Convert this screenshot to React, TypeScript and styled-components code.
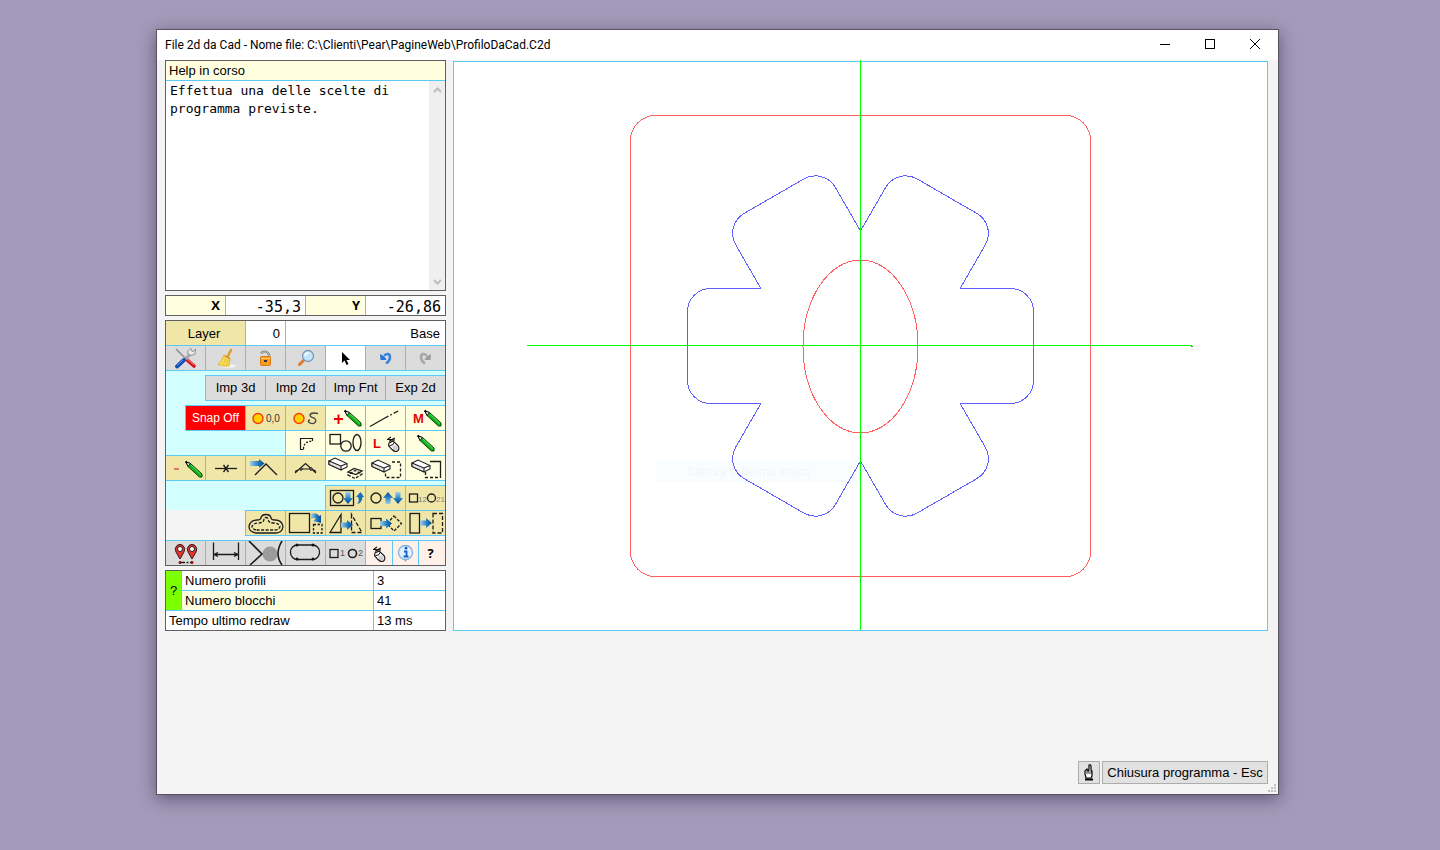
import React from "react";
import styled, { createGlobalStyle } from "styled-components";

const line = "#5ccaf6";
const frame = "#5f5f5f";
const surface = "#f4f4f4";
const khaki = "#f0e6a8";
const cream = "#ffffe0";
const silver = "#dcdcdc";
const peach = "#fff0e8";
const aqua = "#d3ffff";
const sans = `"Liberation Sans", Arial, sans-serif`;
const mono = `"DejaVu Sans Mono", Consolas, monospace`;
const humanist = `"Open Sans", "Segoe UI", sans-serif`;
const caption = `Roboto, "Segoe UI", sans-serif`;

const GlobalStyle = createGlobalStyle`
  * { box-sizing: border-box; }
  body { margin: 0; font: 13px/16px ${sans}; color: #000; }
  button, input, textarea { font: inherit; color: inherit; margin: 0; padding: 0; border: 0; border-radius: 0; background: none; outline: none; }
  svg { display: block; }
`;

const Desktop = styled.div`
  display: flex;
  min-height: 100vh;
  padding: 29px 161px 55px 156px;
  background: #a29bb9;
`;

const Window = styled.div`
  position: relative;
  flex: 1;
  min-width: 0;
  display: flex;
  flex-direction: column;
  border: 1px solid #57525f;
  background: ${surface};
  box-shadow: 0 4px 16px rgba(30, 20, 50, 0.5);
`;

const TitleBar = styled.header`
  display: flex;
  height: 30px;
  padding-left: 8px;
  background: #fff;
`;

const Title = styled.h1`
  flex: 1;
  margin: 0;
  font: 400 12px/30px ${caption};
  white-space: nowrap;
`;

const CaptionButton = styled.button`
  display: grid;
  place-items: center;
  width: 45px;
  height: 29px;
`;

const Content = styled.main`
  display: flex;
  align-items: flex-start;
  gap: 7px;
  padding: 0 10px 0 8px;
`;

const Sidebar = styled.aside`
  flex: none;
  width: 281px;
  display: flex;
  flex-direction: column;
  gap: 4px;
`;

const Panel = styled.section`
  border: 1px solid ${frame};
  background: #fff;
`;

const HelpTitle = styled.label`
  display: block;
  height: 20px;
  padding-left: 3px;
  border-bottom: 1px solid ${line};
  background: ${cream};
  line-height: 19px;
`;

const HelpBody = styled.div`
  display: flex;
  height: 209px;
`;

const HelpText = styled.textarea`
  flex: 1;
  min-width: 0;
  padding: 1px 0 0 4px;
  resize: none;
  overflow: hidden;
  font: 13px/18px ${mono};
`;

const ScrollTrack = styled.div`
  display: flex;
  flex-direction: column;
  justify-content: space-between;
  width: 16px;
  background: #efefef;
`;

const ScrollButton = styled.button`
  display: grid;
  place-items: center;
  height: 17px;
`;

const Coordinates = styled(Panel)`
  display: grid;
  grid-template-columns: 59px 81px 59px 80px;
  height: 21px;
`;

const AxisLabel = styled.label`
  padding-right: 5px;
  background: ${cream};
  font: 700 13px/19px ${humanist};
  text-align: right;
`;

const AxisValue = styled.input`
  width: 100%;
  height: 19px;
  padding: 2px 4px 0 0;
  border: 1px solid ${line};
  border-width: 0 1px;
  font: 15px/17px ${mono};
  text-align: right;
  &:last-child { border-right: 0; }
`;

const Toolbox = styled(Panel)`
  background: ${surface};
`;

const LayerRow = styled.div`
  display: grid;
  grid-template-columns: 79px 40px 1fr;
  height: 24px;
  background: #fff;
`;

const LayerLabel = styled.label`
  padding: 1px 3px 0 0;
  background: ${khaki};
  line-height: 23px;
  text-align: center;
`;

const LayerField = styled.input`
  width: 100%;
  height: 24px;
  padding: 1px 5px 0 0;
  border-left: 1px solid ${line};
  text-align: right;
`;

const AquaArea = styled.div`
  padding-top: 4px;
  background: ${aqua};
`;

const ToolGroup = styled.div`
  margin-bottom: 4px;
`;

const ToolRow = styled.div<{ $joined?: boolean; $open?: boolean }>`
  display: flex;
  justify-content: flex-end;
  height: ${(p) => (p.$open ? 25 : 26)}px;
  margin-top: ${(p) => (p.$joined ? -1 : 0)}px;
  & > button { border-bottom-width: ${(p) => (p.$open ? 0 : 1)}px; }
`;

const Tool = styled.button<{ $bg: string; $w?: number; $first?: boolean }>`
  flex: none;
  display: flex;
  align-items: center;
  justify-content: center;
  width: ${(p) => p.$w ?? 40}px;
  border: 0 solid ${line};
  border-width: 1px 0 1px ${(p) => (p.$first ? 0 : 1)}px;
  background: ${(p) => p.$bg};
  white-space: nowrap;
  overflow: hidden;
`;

const SnapTool = styled(Tool)`
  color: #fff;
  font-size: 12px;
`;

const HelpTool = styled(Tool)`
  padding-right: 3px;
  font: 700 13px/16px ${humanist};
`;

const Stats = styled.table`
  width: 100%;
  border: 1px solid ${frame};
  border-spacing: 0;
  background: #fff;
  table-layout: fixed;
  th, td {
    height: 20px;
    padding: 0 0 0 3px;
    border-bottom: 1px solid ${line};
    font-weight: 400;
    line-height: 19px;
    text-align: left;
  }
  td { border-left: 1px solid ${line}; }
  tr:last-child > * { height: 19px; border-bottom: 0; }
`;

const StatHelpCell = styled.td`
  && { padding: 0; border-left: 0; border-right: 1px solid ${line}; background: #7cff00; text-align: center; }
`;

const StatName = styled.th<{ $tint?: boolean }>`
  background: ${(p) => (p.$tint ? cream : "#fff")};
`;

const StatHelp = styled.button`
  width: 15px;
  height: 38px;
`;

const Drawing = styled.section`
  flex: 1;
  min-width: 0;
  margin-top: 1px;
  border: 1px solid ${line};
  background: #fff;
  svg { width: 100%; height: auto; overflow: visible; }
`;

const Footer = styled.footer`
  display: flex;
  justify-content: flex-end;
  gap: 2px;
  margin-top: auto;
  padding: 0 10px 10px;
`;

const FooterButton = styled.button`
  display: grid;
  place-items: center;
  min-width: 22px;
  height: 23px;
  border: 1px solid #adadad;
  background: #e1e1e1;
`;

const CloseProgram = styled(FooterButton)`
  width: 166px;
`;

const Grip = styled.svg`
  position: absolute;
  right: 1px;
  bottom: 1px;
`;

/* ---------- icons ---------- */

type IconProps = { w?: number; children: React.ReactNode };
const Icon = ({ w = 39, children }: IconProps) => (
  <svg width={w} height={24} viewBox={`0 0 ${w} 24`} fill="none" stroke="#1c1c1c" strokeWidth="1.3" aria-hidden="true">
    {children}
  </svg>
);

const Pencil = ({ x, y }: { x: number; y: number }) => (
  <g transform={`translate(${x} ${y})`} strokeWidth="1">
    <path d="M0 0 L4.500 1.500 L16 12 L16 15 L13.500 15 L2 4.500 Z" fill="#12b41c" stroke="#053c08" />
    <path d="M5 3 L15 12.500" stroke="#5fe05f" />
    <path d="M0 0 L4.500 1.500 L2 4.500 Z" fill="#fff" stroke="#111" />
    <path d="M-.5 -.5 L1.500 1" stroke="#000" strokeWidth="2" />
  </g>
);

const Arrow = ({ x, y, r = 0 }: { x: number; y: number; r?: number }) => (
  <g transform={`translate(${x} ${y}) rotate(${r})`} stroke="none">
    <path d="M-6 -2.500 H0 V-5 L6 0 L0 5 V2.500 H-6 Z" fill="url(#blueArrow)" />
  </g>
);

const Mouse = ({ x, y }: { x: number; y: number }) => (
  <g transform={`translate(${x} ${y})`} stroke="#111" strokeWidth="1.1">
    <path d="M1 2 L4 0 M0 2.500 H5 L8 1 M3 5 Q2 3 5 3 L8 3" />
    <path d="M2 6 L6 4 L11 8.500 Q13 12 10.500 14 Q8 15.500 5 12.500 L1.500 8.500 Z" fill="#fff" />
    <path d="M2.500 8.500 L5.500 8 L7 5.500" strokeWidth="1" />
    <path d="M5 10 H11 M6 12 H11.500 M7 8.500 V13.500 M9 8 V14" strokeWidth=".4" stroke="#777" />
  </g>
);

const Eraser = ({ x, y }: { x: number; y: number }) => (
  <g transform={`translate(${x} ${y})`} strokeWidth="1.1">
    <path d="M0 3 L6 0 L18 5.500 V9 L12 12 L0 6.500 Z" fill="#fff" />
    <path d="M0 3 L12 8 V12 L0 6.500 Z" fill="#e6e6e6" />
    <path d="M12 8 L18 5.500" />
  </g>
);

const Sun = ({ x }: { x: number }) => <circle cx={x} cy="12.5" r="5" fill="#ffd200" stroke="#f43c14" strokeWidth="1.4" />;

const Letter = ({ x, children }: { x: number; children: string }) => (
  <text x={x} y="17" fontFamily="Liberation Sans" fontSize="13" fontWeight="700" fill="#e60000" stroke="none">{children}</text>
);

const Digits = ({ x, y = 16, fill = "#555", size = 9, children }: { x: number; y?: number; fill?: string; size?: number; children: string }) => (
  <text x={x} y={y} fontFamily="Liberation Sans" fontSize={size} fill={fill} stroke="none">{children}</text>
);

const icons = {
  tools: (
    <Icon>
      <path d="M10 3 L20 13" stroke="#8b8f96" strokeWidth="1.6" />
      <path d="M20 13 L28 20" stroke="#d5131d" strokeWidth="3.600" strokeLinecap="round" />
      <path d="M21 13 L28 19" stroke="#ff7b7b" strokeWidth="1" />
      <path d="M26 7 L19 13" stroke="#a3a8b0" strokeWidth="3" />
      <path d="M25 2.500 Q21 4 22 8 Q26 11 29 8 L29.500 3 L26.500 6 Z" fill="#e8eaec" stroke="#8a8f96" strokeWidth="1" />
      <path d="M18 14 L11 20.500" stroke="#1450b4" strokeWidth="4" strokeLinecap="round" />
      <path d="M17 14 L11 19.500" stroke="#5f9bf0" strokeWidth="1" />
    </Icon>
  ),
  broom: (
    <Icon>
      <ellipse cx="22" cy="20" rx="8" ry="1.800" fill="#f2f2f2" stroke="none" />
      <path d="M25 4 L22 10" stroke="#e09a26" strokeWidth="2.400" strokeLinecap="round" />
      <path d="M18 9 L24 12 L23 20 Q17 21 12 18.500 Q16 15 18 9 Z" fill="#f7dc55" stroke="#dcb020" strokeWidth=".8" />
      <path d="M20 12 L17 19 M22 13 L20.500 19" stroke="#e0b52c" strokeWidth=".7" />
      <path d="M18.500 10 L24 12.500" stroke="#d0713a" strokeWidth="1" />
    </Icon>
  ),
  lock: (
    <Icon>
      <path d="M15 7.500 Q17 5 20.500 6 Q24 7.500 23 12" stroke="#777" strokeWidth="2.200" />
      <path d="M15 7.500 Q17 5 20.500 6 Q24 7.500 23 12" stroke="#ddd" strokeWidth=".8" />
      <rect x="14.500" y="10.500" width="10" height="9" rx="1" fill="#fa9a1e" stroke="#d87a10" strokeWidth="1" />
      <path d="M15 12.500 H24" stroke="#ffc970" strokeWidth="1" />
      <rect x="18" y="14" width="3" height="2" fill="#333" stroke="none" />
    </Icon>
  ),
  magnifier: (
    <Icon>
      <path d="M17.500 14.500 L13.500 18.500" stroke="#e07a2c" strokeWidth="3" strokeLinecap="round" />
      <circle cx="22" cy="10" r="5.500" fill="#bfe6fa" stroke="#7b95b5" strokeWidth="1.300" />
      <path d="M19 10 Q20 7 23 7" stroke="#fff" strokeWidth="1.600" />
    </Icon>
  ),
  pointer: (
    <Icon>
      <path d="M16 6 V17 L18.500 14.500 L20.500 19 L22.500 18 L20.500 14 H24 Z" fill="#000" stroke="none" />
    </Icon>
  ),
  undo: (
    <Icon>
      <path d="M18 9.500 Q23.500 6 24 11 Q24 15 20 17.500" stroke="#3c82dc" strokeWidth="2.600" />
      <path d="M14 8 L14.500 14 H20.500 L18.500 10.500 Z" fill="#2a76d6" stroke="none" />
    </Icon>
  ),
  redo: (
    <Icon>
      <path d="M21 9.500 Q15.500 6 15 11 Q15 15 19 17.500" stroke="#a6a6a6" strokeWidth="2.600" />
      <path d="M25 8 L24.500 14 H18.500 L20.500 10.500 Z" fill="#9c9c9c" stroke="none" />
    </Icon>
  ),
  origin: <Icon><Sun x={12} /><Digits x={20} size={10} fill="#333">0,0</Digits></Icon>,
  curve: (
    <Icon>
      <Sun x={13} />
      <path d="M32 7.500 Q25 6 24 9 Q24 11 28 12 Q31 14 29 16.500 Q26 19 22.500 16 Q22 14 24 14" strokeWidth="1.300" stroke="#444" />
    </Icon>
  ),
  addPencil: <Icon><path d="M8 13 H17 M12.500 8.500 V18" stroke="#f00000" strokeWidth="2" /><Pencil x={19} y={5} /></Icon>,
  dashLine: <Icon><path d="M4 20.500 L18 12.500" /><path d="M18 12.500 L34 4" strokeDasharray="5 2 2 2" /></Icon>,
  modify: <Icon><Letter x={7}>M</Letter><Pencil x={19} y={5} /></Icon>,
  arcCorner: (
    <Icon>
      <path d="M14.500 19 V7.500 H27 M14 18.500 H17.500 M26.500 7 V10" strokeWidth="1.200" />
      <path d="M17.500 18 Q17.500 10.500 26 10" strokeDasharray="2 1.500" />
    </Icon>
  ),
  shapes: (
    <Icon>
      <rect x="4" y="3.500" width="10.500" height="9.500" />
      <circle cx="20" cy="15" r="5.200" fill={cream} />
      <ellipse cx="31" cy="11.500" rx="4" ry="8" />
    </Icon>
  ),
  lMouse: <Icon><Letter x={7}>L</Letter><Mouse x={21} y={6} /></Icon>,
  pencil: <Icon><Pencil x={12} y={5} /></Icon>,
  removePencil: <Icon><path d="M8 13 H13" stroke="#c33" strokeWidth="1.200" /><Pencil x={20} y={6} /></Icon>,
  split: <Icon><path d="M9 12.500 H31" /><path d="M17.500 9 L22.500 16 M22.500 9 L17.500 16" /></Icon>,
  extend: (
    <Icon>
      <path d="M9 19 L20 8 L31 19" />
      <path d="M4 5 H13 V3 L18.500 7.500 L13 12 V10 H4 Z" fill="url(#blueArrow)" stroke="none" />
    </Icon>
  ),
  joint: (
    <Icon>
      <path d="M9 17 L19.500 7.500 L30 17 M9 15.500 Q12 13.500 15 13 H25 Q28 13.500 30 15.500" strokeWidth="1.100" />
      <circle cx="15" cy="13" r="1.300" fill="#999" strokeWidth="1" /><circle cx="25" cy="13" r="1.300" fill="#999" strokeWidth="1" />
    </Icon>
  ),
  eraseLayer: (
    <Icon>
      <path d="M22 16 L28 12.500 L36 15 L30 18.500 Z" />
      <path d="M22 19 L29 22.500 L36 18 L29 14.500 Z" strokeDasharray="3 1.500" />
      <Eraser x={3} y={2} />
    </Icon>
  ),
  eraseDashed: <Icon><path d="M26 6 H34.500 V21.500 H19.500 V14" strokeDasharray="3 2" /><Eraser x={6} y={4} /></Icon>,
  eraseSide: <Icon><path d="M24 5.500 H34.500 V22" /><path d="M32 21.500 H19.500 V14" strokeDasharray="3 2" /><Eraser x={6} y={4} /></Icon>,
  insideOut: (
    <Icon>
      <rect x="4.500" y="4.500" width="23" height="15" /><circle cx="12" cy="12" r="5" />
      <Arrow x={22} y={12} r={90} />
      <path d="M31 18 Q34 15 32 11 H30 L34.500 6 L38 11 H36.500 Q36 17 31 18 Z" fill="#1b70b6" stroke="none" />
    </Icon>
  ),
  upDown: <Icon><circle cx="10" cy="12" r="5" /><Arrow x={22} y={12} r={-90} /><Arrow x={32} y={12} r={90} /></Icon>,
  renumber: (
    <Icon>
      <rect x="3.500" y="8" width="8" height="8" /><Digits x={12} size={8} fill="#777">12</Digits>
      <circle cx="25.500" cy="12" r="4" /><Digits x={30} size={8} fill="#888">21</Digits>
    </Icon>
  ),
  offset: (
    <Icon>
      <path d="M10 22 Q3 21 3 15.500 Q4 9 11 9 Q15 9 15 6.500 Q16 3.500 20 3.500 Q24 3.500 25 6.500 Q25 9 29 9 Q36 9 37 15.500 Q36 22 30 22 Z" />
      <path d="M10 19 Q6 18 6 15.500 Q7 12.500 12 12 Q18 12 18 8 Q18 6.500 20 6.500 Q22 6.500 22 8 Q22 12 28 12 Q33 12.500 34 15.500 Q33 19 29 19 Z" strokeDasharray="3 1.500" />
    </Icon>
  ),
  scale: (
    <Icon>
      <rect x="3.500" y="2.500" width="20" height="19" />
      <path d="M25 3 Q31 1 33 5 L35 4 V12 L27 10 L29.500 8 Q29 6 25 8 Z" fill="url(#blueArrow)" stroke="none" />
      <rect x="27.500" y="13.500" width="8.500" height="8.500" strokeDasharray="2.500 1.500" />
    </Icon>
  ),
  mirror: (
    <Icon>
      <path d="M4 21.500 L15 3.500 V21.500 Z" />
      <path d="M25.500 3.500 V21.500 H36 Z" strokeDasharray="4 2" />
      <Arrow x={21} y={14} />
    </Icon>
  ),
  rotate: (
    <Icon>
      <rect x="5" y="7.500" width="10" height="10" />
      <path d="M28 5 L35.500 12.500 L28 20 L21 12.500 Z" strokeDasharray="3 1.500" />
      <Arrow x={20} y={12.5} />
    </Icon>
  ),
  move: (
    <Icon>
      <rect x="4" y="2.500" width="9.500" height="19.500" />
      <rect x="27" y="2.500" width="9.500" height="19.500" strokeDasharray="4 2" />
      <Arrow x={20} y={12} />
    </Icon>
  ),
  pins: (
    <Icon>
      {[14, 26].map((x) => (
        <g key={x}>
          <path d={`M${x} 18 L${x - 4} 11 Q${x - 6} 7 ${x - 3} 4.500 Q${x} 2 ${x + 3} 4.500 Q${x + 6} 7 ${x + 4} 11 Z`} fill="#e5332f" stroke="#38191b" strokeWidth="1" />
          <circle cx={x} cy="8" r="2.500" fill="#fff" stroke="#222" strokeWidth="1" />
        </g>
      ))}
      <path d="M14 21.500 H26" strokeDasharray="5 1.500 2 1.500" />
      <circle cx="14" cy="21.500" r="1" fill="#d00" stroke="#700" strokeWidth="1" /><circle cx="26" cy="21.500" r="1" fill="#d00" stroke="#700" strokeWidth="1" />
    </Icon>
  ),
  measure: (
    <Icon>
      <path d="M7.500 1.500 V19 M32.500 1.500 V19 M8 13.500 H32 M12 11.500 L8 13.500 L12 15.500 M28 11.500 L32 13.500 L28 15.500" />
    </Icon>
  ),
  tangent: (
    <Icon>
      <circle cx="24" cy="13" r="7.500" fill="#9b9b9b" stroke="none" />
      <path d="M3 0 L16 13 L4 24 M36 0 Q28 13 36 24" strokeWidth="1.600" />
    </Icon>
  ),
  slot: (
    <Icon>
      <rect x="4.500" y="4" width="29" height="14.500" rx="7" />
      {[11, 27].map((x) => [4, 18].map((y) => <circle key={`${x}-${y}`} cx={x} cy={y} r="1.500" fill="#111" stroke="none" />))}
    </Icon>
  ),
  count: (
    <Icon>
      <rect x="4" y="8.500" width="8" height="8" /><Digits x={14} y={15}>1</Digits>
      <circle cx="26.500" cy="12.500" r="4" strokeWidth="1.600" /><Digits x={32} y={15}>2</Digits>
    </Icon>
  ),
  mouse: <Icon w={26}><Mouse x={7} y={6} /></Icon>,
  info: (
    <Icon w={25}>
      <path d="M10 17 L12.500 21 L15 17 Z" fill="#7aa6dc" stroke="none" />
      <circle cx="12.500" cy="11.500" r="7" fill="#e2f1ff" stroke="#85b0de" strokeWidth="1.300" />
      <path d="M11 10.500 H13.500 V15.500 M10.500 15.500 H15.500" stroke="#1260c4" strokeWidth="1.800" />
      <circle cx="13" cy="7.200" r="1.400" fill="#1260c4" stroke="none" />
    </Icon>
  ),
};

type ToolSpec = { icon: keyof typeof icons; label: string; bg: string; w?: number; first?: boolean };
const t = (icon: keyof typeof icons, label: string, bg: string, extra: Partial<ToolSpec> = {}): ToolSpec => ({ icon, label, bg, ...extra });

const Tools = ({ items }: { items: ToolSpec[] }) => (
  <>
    {items.map((i) => (
      <Tool key={i.icon} $bg={i.bg} $w={i.w} $first={i.first} aria-label={i.label} type="button">
        {icons[i.icon]}
      </Tool>
    ))}
  </>
);

const general = [
  t("tools", "Strumenti", silver, { w: 39, first: true }),
  t("broom", "Pulisci", silver),
  t("lock", "Blocca", silver),
  t("magnifier", "Zoom", silver),
  t("pointer", "Selezione", "#fff"),
  t("undo", "Annulla", silver),
  t("redo", "Ripeti", silver),
];
const snap = [
  t("origin", "Origine", khaki),
  t("curve", "Curva", khaki),
  t("addPencil", "Aggiungi", cream),
  t("dashLine", "Linea", cream),
  t("modify", "Modifica", cream),
];
const draw = [
  t("arcCorner", "Raccordo", cream),
  t("shapes", "Forme", cream),
  t("lMouse", "Linea con mouse", cream),
  t("pencil", "Disegna", cream),
];
const edit = [
  t("removePencil", "Rimuovi", khaki, { w: 39, first: true }),
  t("split", "Spezza", khaki),
  t("extend", "Estendi", khaki),
  t("joint", "Unisci", khaki),
  t("eraseLayer", "Cancella layer", cream),
  t("eraseDashed", "Cancella profilo", cream),
  t("eraseSide", "Cancella blocco", cream),
];
const order = [t("insideOut", "Interno esterno", khaki), t("upDown", "Ordine", khaki), t("renumber", "Rinumera", khaki)];
const transform = [
  t("offset", "Offset", khaki),
  t("scale", "Scala", khaki),
  t("mirror", "Specchia", khaki),
  t("rotate", "Ruota", khaki),
  t("move", "Sposta", khaki),
];
const inspect = [
  t("pins", "Punti", silver, { w: 39, first: true }),
  t("measure", "Misura", silver),
  t("tangent", "Tangente", silver),
  t("slot", "Asola", silver),
  t("count", "Conteggio", silver),
  t("mouse", "Mouse", peach, { w: 27 }),
  t("info", "Informazioni", peach, { w: 26 }),
];

const Profile = () => (
  <svg viewBox="0 0 813 568" fill="none" strokeWidth="1" shapeRendering="crispEdges" role="img" aria-label="Profilo">
    <rect x="202" y="398" width="205" height="22" fill="#fafdff" />
    <text x="233" y="414" fontFamily="Roboto" fontSize="12" fill="#f3f5f8">Cattura schermo intero</text>
    <rect x="176.500" y="53.500" width="460" height="461" rx="25" stroke="#ff5f5f" />
    <ellipse cx="406.500" cy="284.500" rx="57.500" ry="86.500" stroke="#ff5f5f" />
    <g transform="translate(406.500 284)" stroke="#5f5fff">
      {[0, 60, 120, 180, 240, 300].map((a) => (
        <path key={a} transform={`rotate(${a})`} d="M99.600 -57.500 H150 A23 23 0 0 1 173 -34.500 V34.500 A23 23 0 0 1 150 57.500 H99.600" />
      ))}
    </g>
    <path d="M406.500 -2 V568 M73 283.500 H738" stroke="#00ff00" />
    <path d="M737 284.500 H739" stroke="#00c000" />
  </svg>
);

export default function App() {
  return (
    <Desktop>
      <GlobalStyle />
      <svg width="0" height="0" style={{ position: "absolute" }} aria-hidden="true">
        <defs>
          <linearGradient id="blueArrow">
            <stop offset="0" stopColor="#9cd0ea" />
            <stop offset=".6" stopColor="#1f78be" />
            <stop offset="1" stopColor="#0a4a94" />
          </linearGradient>
        </defs>
      </svg>
      <Window>
        <TitleBar>
          <Title>File 2d da Cad - Nome file: C:\Clienti\Pear\PagineWeb\ProfiloDaCad.C2d</Title>
          <CaptionButton aria-label="Riduci a icona">
            <svg width="11" height="11" stroke="#000"><path d="M0 5.500 H10" /></svg>
          </CaptionButton>
          <CaptionButton aria-label="Ingrandisci">
            <svg width="11" height="11" stroke="#000" fill="none"><rect x=".5" y=".5" width="9" height="9" /></svg>
          </CaptionButton>
          <CaptionButton aria-label="Chiudi">
            <svg width="11" height="11" stroke="#000"><path d="M0 0 L10 10 M10 0 L0 10" /></svg>
          </CaptionButton>
        </TitleBar>

        <Content>
          <Sidebar>
            <Panel>
              <HelpTitle htmlFor="help">Help in corso</HelpTitle>
              <HelpBody>
                <HelpText id="help" readOnly value={"Effettua una delle scelte di\nprogramma previste."} />
                <ScrollTrack>
                  <ScrollButton aria-label="Scorri su">
                    <svg width="9" height="6" fill="none" stroke="#bdbdbd" strokeWidth="2"><path d="M1 5 L4.500 1.500 L8 5" /></svg>
                  </ScrollButton>
                  <ScrollButton aria-label="Scorri giù">
                    <svg width="9" height="6" fill="none" stroke="#bdbdbd" strokeWidth="2"><path d="M1 1 L4.500 4.500 L8 1" /></svg>
                  </ScrollButton>
                </ScrollTrack>
              </HelpBody>
            </Panel>

            <Coordinates>
              <AxisLabel htmlFor="x">X</AxisLabel>
              <AxisValue id="x" readOnly value="-35,3" />
              <AxisLabel htmlFor="y">Y</AxisLabel>
              <AxisValue id="y" readOnly value="-26,86" />
            </Coordinates>

            <Toolbox>
              <LayerRow>
                <LayerLabel htmlFor="layer">Layer</LayerLabel>
                <LayerField id="layer" defaultValue="0" />
                <LayerField aria-label="Nome layer" defaultValue="Base" />
              </LayerRow>
              <ToolRow><Tools items={general} /></ToolRow>
              <AquaArea>
                <ToolGroup>
                  <ToolRow>
                    {["Imp 3d", "Imp 2d", "Imp Fnt", "Exp 2d"].map((label) => (
                      <Tool key={label} $bg={silver} $w={60}>{label}</Tool>
                    ))}
                  </ToolRow>
                </ToolGroup>
                <ToolGroup>
                  <ToolRow>
                    <SnapTool $bg="#ff0000" $w={60}>Snap Off</SnapTool>
                    <Tools items={snap} />
                  </ToolRow>
                  <ToolRow $joined><Tools items={draw} /></ToolRow>
                  <ToolRow $joined><Tools items={edit} /></ToolRow>
                </ToolGroup>
                <ToolRow $open><Tools items={order} /></ToolRow>
              </AquaArea>
              <ToolGroup>
                <ToolRow><Tools items={transform} /></ToolRow>
              </ToolGroup>
              <ToolRow $open>
                <Tools items={inspect} />
                <HelpTool $bg={peach} $w={27}>?</HelpTool>
              </ToolRow>
            </Toolbox>

            <Stats>
              <colgroup>
                <col width="16" />
                <col />
                <col width="72" />
              </colgroup>
              <tbody>
                <tr>
                  <StatHelpCell rowSpan={2}><StatHelp>?</StatHelp></StatHelpCell>
                  <StatName scope="row">Numero profili</StatName>
                  <td>3</td>
                </tr>
                <tr>
                  <StatName scope="row" $tint>Numero blocchi</StatName>
                  <td>41</td>
                </tr>
                <tr>
                  <StatName scope="row" colSpan={2}>Tempo ultimo redraw</StatName>
                  <td>13 ms</td>
                </tr>
              </tbody>
            </Stats>
          </Sidebar>

          <Drawing><Profile /></Drawing>
        </Content>

        <Footer>
          <FooterButton aria-label="Selezione manuale">
            <svg width="12" height="17" viewBox="0 0 12 17" fill="#fff" stroke="#000" strokeWidth="1.200">
              <path d="M6 1 Q8 0 8 3 V6 L9 7 V12 L8 14 H3 L2 10 L2 7 L4 5 L5 7 L6 5 Z" />
              <path d="M4 7 V10 M6 6 V10 M8 7 V10" strokeWidth=".8" />
              <path d="M2 15.500 H10" strokeWidth="2" />
            </svg>
          </FooterButton>
          <CloseProgram>Chiusura programma - Esc</CloseProgram>
        </Footer>
        <Grip width="9" height="9" fill="#bfbfbf" aria-hidden="true">
          {[[6, 0], [3, 3], [6, 3], [0, 6], [3, 6], [6, 6]].map(([x, y]) => (
            <rect key={`${x}-${y}`} x={x} y={y} width="2" height="2" />
          ))}
        </Grip>
      </Window>
    </Desktop>
  );
}
